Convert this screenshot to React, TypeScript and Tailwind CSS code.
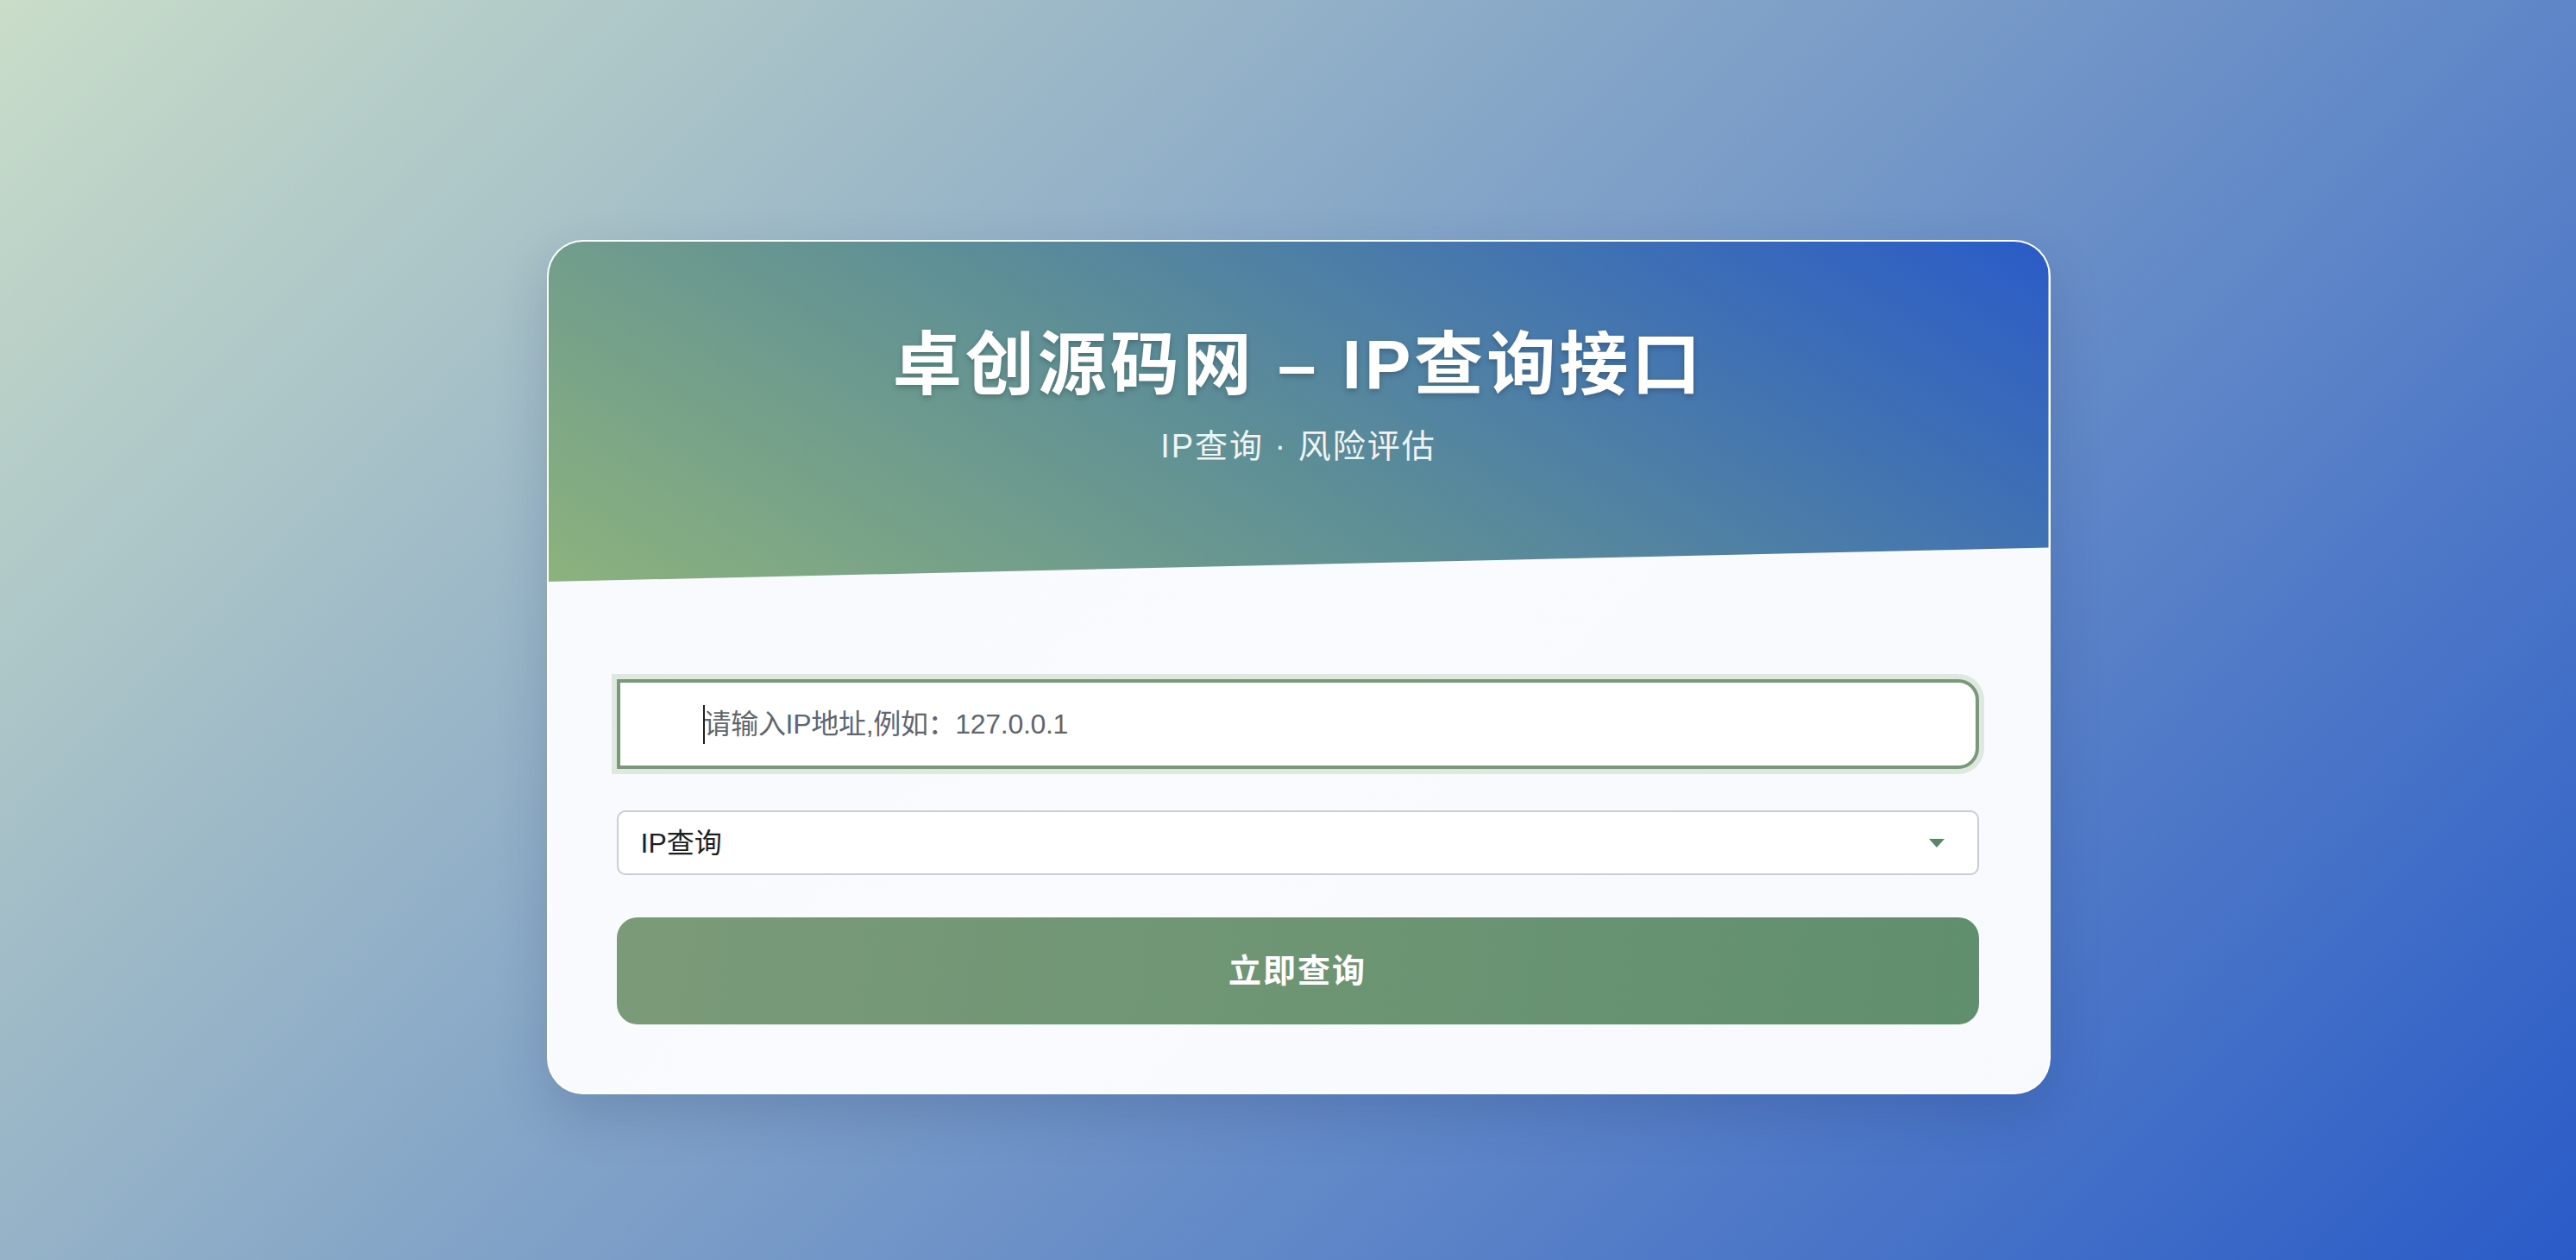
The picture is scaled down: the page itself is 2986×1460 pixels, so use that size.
import React from "react";

const FONT = '"Liberation Sans", "Noto Sans CJK SC", sans-serif';

export default function App() {
  return (
    <div
      className="min-h-[1460px] w-full flex items-center justify-center pl-[24px] pt-[86px] bg-[linear-gradient(135deg,#c9ddc8_0%,#2a5bc7_100%)]"
      style={{ fontFamily: FONT }}
    >
      <div className="w-[1743px] rounded-[42px] border-2 border-white/90 overflow-hidden bg-[linear-gradient(135deg,#f7f9fd_0%,#fafbfe_50%,#f7f9fd_100%)] shadow-[0_24px_60px_rgba(20,40,90,0.18)]">
        <div className="h-[394px] flex flex-col items-center bg-[linear-gradient(32deg,#8cb27d_0%,#5e8f96_45%,#2a5bc8_100%)] [clip-path:polygon(0_0,100%_0,100%_90%,0_100%)]">
          <h1 className="mt-[95px] text-[80px] leading-[96px] font-bold tracking-[4px] text-white [text-shadow:0_3px_6px_rgba(0,0,0,0.22)]">
            卓创源码网 – IP查询接口
          </h1>
          <p className="mt-[18px] text-[38px] leading-[56px] tracking-[2px] text-white/90">
            IP查询 · 风险评估
          </p>
        </div>
        <div className="pl-[79px] pr-[81px] pt-[113px] pb-[79px] flex flex-col">
          <div className="relative">
            <input
              type="text"
              placeholder="请输入IP地址,例如：127.0.0.1"
              className="w-full h-[104px] border-4 border-[#7a9978] rounded-l-none rounded-r-[24px] bg-white pl-[97px] pr-6 text-[32px] tracking-[-0.3px] text-[#222] placeholder:text-[#5f6672] outline-none shadow-[0_0_0_6px_#dfe8df]"
              style={{ fontFamily: FONT }}
            />
            <span className="absolute left-[100px] top-[30px] h-[45px] w-[2px] bg-[#1f1f1f]" />
          </div>
          <div className="relative mt-[48px]">
            <select
              className="w-full h-[75px] appearance-none border-2 border-[#c8ced6] rounded-[10px] bg-white pl-[26px] text-[32px] text-[#1e1e1e] outline-none"
              style={{ fontFamily: FONT }}
              defaultValue="ip"
            >
              <option value="ip">IP查询</option>
              <option value="risk">风险评估</option>
            </select>
            <svg
              className="absolute right-[40px] top-[33px] pointer-events-none"
              width="18"
              height="10"
              viewBox="0 0 18 10"
            >
              <path d="M0 0 H18 L9 10 Z" fill="#5b8468" />
            </svg>
          </div>
          <button
            className="mt-[49px] h-[124px] w-full rounded-[24px] bg-[linear-gradient(100deg,#7b9a78_0%,#6d9574_50%,#608f6e_100%)] text-white text-[38px] font-bold tracking-[2px]"
            style={{ fontFamily: FONT }}
          >
            立即查询
          </button>
        </div>
      </div>
    </div>
  );
}
